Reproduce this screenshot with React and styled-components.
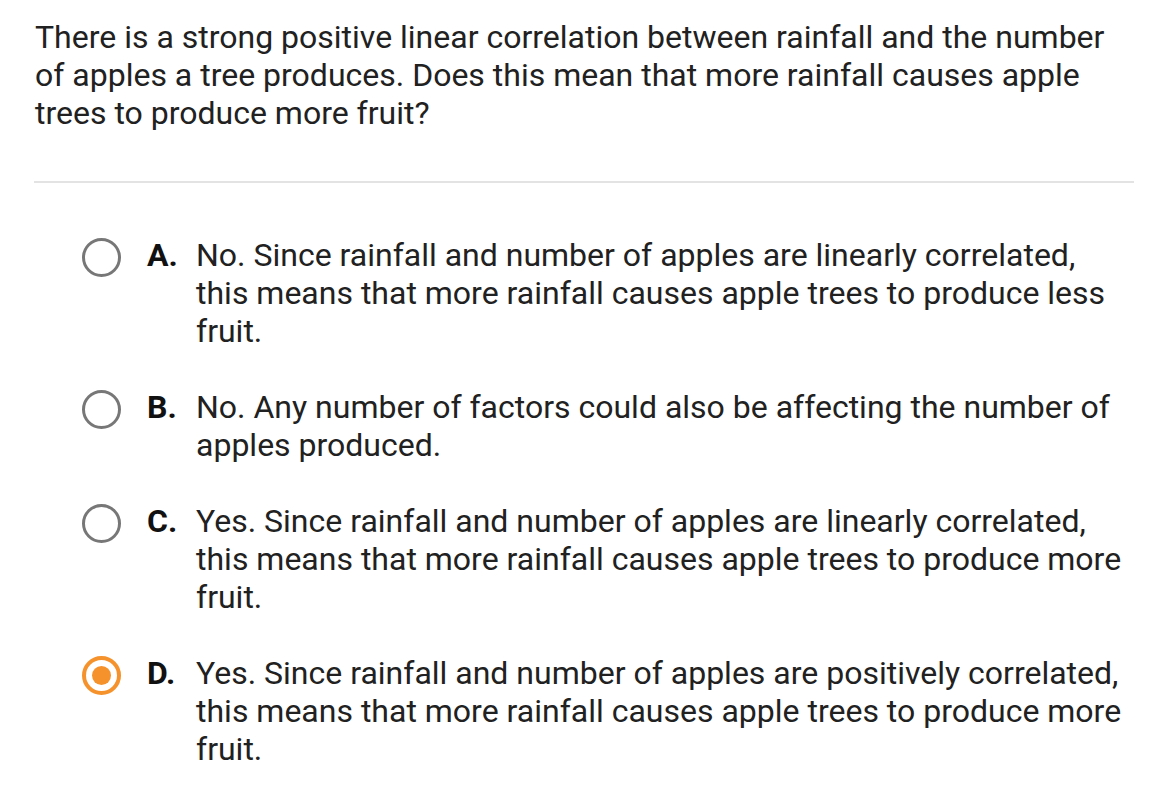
import React from "react";
import styled, { createGlobalStyle } from "styled-components";

const GlobalStyle = createGlobalStyle`
  body {
    margin: 0;
    background: #ffffff;
    font-family: Roboto, "Helvetica Neue", Arial, sans-serif;
    color: #212121;
  }
`;

const options = [
  {
    letter: "A.",
    text:
      "No. Since rainfall and number of apples are linearly correlated, this means that more rainfall causes apple trees to produce less fruit.",
  },
  {
    letter: "B.",
    text:
      "No. Any number of factors could also be affecting the number of apples produced.",
  },
  {
    letter: "C.",
    text:
      "Yes. Since rainfall and number of apples are linearly correlated, this means that more rainfall causes apple trees to produce more fruit.",
  },
  {
    letter: "D.",
    text:
      "Yes. Since rainfall and number of apples are positively correlated, this means that more rainfall causes apple trees to produce more fruit.",
    selected: true,
  },
];

function App() {
  return (
    <Page>
      <GlobalStyle />
      <Question>
        There is a strong positive linear correlation between rainfall and the
        number of apples a tree produces. Does this mean that more rainfall
        causes apple trees to produce more fruit?
      </Question>
      <Divider />
      <OptionList>
        {options.map((o) => (
          <Option key={o.letter}>
            <Radio $selected={o.selected} />
            <Letter>{o.letter}</Letter>
            <OptionText>{o.text}</OptionText>
          </Option>
        ))}
      </OptionList>
    </Page>
  );
}

export default App;

const Page = styled.div`
  width: 1174px;
  height: 806px;
  box-sizing: border-box;
  padding: 18px 40px 0 35px;
  overflow: hidden;
`;

const Question = styled.p`
  margin: 0;
  font-size: 32px;
  line-height: 38px;
  max-width: 1090px;
`;

const Divider = styled.hr`
  border: none;
  height: 2px;
  background: #e3e3e3;
  margin: 49px 0 0 -1px;
  width: 1100px;
`;

const OptionList = styled.div`
  display: flex;
  flex-direction: column;
  gap: 38px;
  margin-top: 53px;
  padding-left: 47px;
`;

const Option = styled.div`
  display: flex;
  align-items: flex-start;
  font-size: 32px;
  line-height: 38px;
`;

const Radio = styled.span`
  flex: none;
  box-sizing: border-box;
  width: 39px;
  height: 39px;
  margin-top: 2px;
  border-radius: 50%;
  border: 3px solid ${(p) => (p.$selected ? "#f6922b" : "#777777")};
  display: flex;
  align-items: center;
  justify-content: center;
  &::after {
    content: "";
    display: ${(p) => (p.$selected ? "block" : "none")};
    width: 19px;
    height: 19px;
    border-radius: 50%;
    background: #f6922b;
  }
  ${(p) => p.$selected && "border-width: 4px;"}
`;

const Letter = styled.span`
  flex: none;
  width: 49px;
  margin-left: 26px;
  font-weight: 700;
  color: #111111;
`;

const OptionText = styled.span`
  flex: 1;
  max-width: 930px;
  color: #212121;
`;
